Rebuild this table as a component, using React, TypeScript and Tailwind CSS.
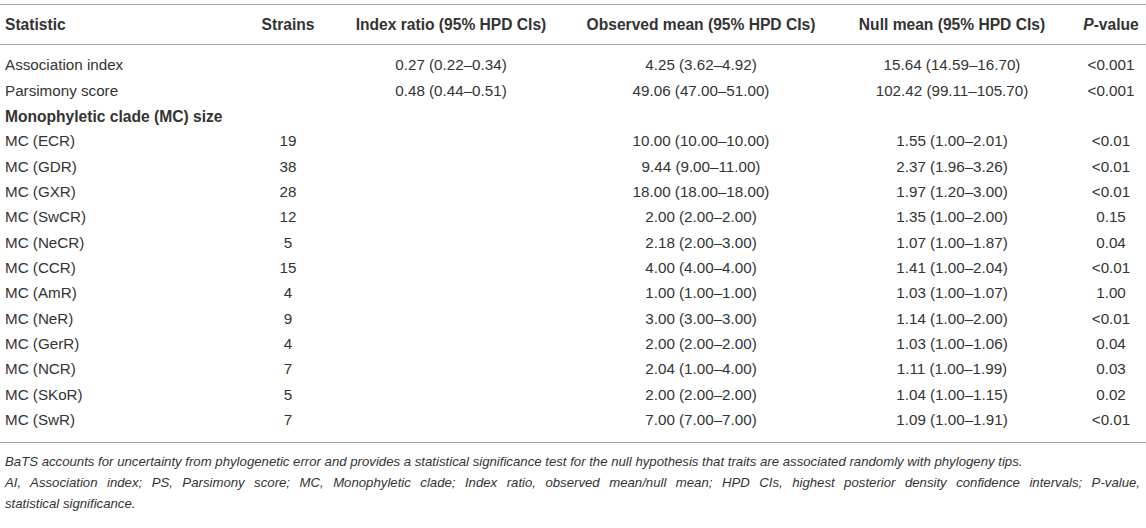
import React from 'react';

type Row = {
  name: string;
  strains?: string;
  ratio?: string;
  observed?: string;
  nullMean?: string;
  p?: string;
  bold?: boolean;
};

const rows: Row[] = [
  { name: 'Association index', ratio: '0.27 (0.22–0.34)', observed: '4.25 (3.62–4.92)', nullMean: '15.64 (14.59–16.70)', p: '<0.001' },
  { name: 'Parsimony score', ratio: '0.48 (0.44–0.51)', observed: '49.06 (47.00–51.00)', nullMean: '102.42 (99.11–105.70)', p: '<0.001' },
  { name: 'Monophyletic clade (MC) size', bold: true },
  { name: 'MC (ECR)', strains: '19', observed: '10.00 (10.00–10.00)', nullMean: '1.55 (1.00–2.01)', p: '<0.01' },
  { name: 'MC (GDR)', strains: '38', observed: '9.44 (9.00–11.00)', nullMean: '2.37 (1.96–3.26)', p: '<0.01' },
  { name: 'MC (GXR)', strains: '28', observed: '18.00 (18.00–18.00)', nullMean: '1.97 (1.20–3.00)', p: '<0.01' },
  { name: 'MC (SwCR)', strains: '12', observed: '2.00 (2.00–2.00)', nullMean: '1.35 (1.00–2.00)', p: '0.15' },
  { name: 'MC (NeCR)', strains: '5', observed: '2.18 (2.00–3.00)', nullMean: '1.07 (1.00–1.87)', p: '0.04' },
  { name: 'MC (CCR)', strains: '15', observed: '4.00 (4.00–4.00)', nullMean: '1.41 (1.00–2.04)', p: '<0.01' },
  { name: 'MC (AmR)', strains: '4', observed: '1.00 (1.00–1.00)', nullMean: '1.03 (1.00–1.07)', p: '1.00' },
  { name: 'MC (NeR)', strains: '9', observed: '3.00 (3.00–3.00)', nullMean: '1.14 (1.00–2.00)', p: '<0.01' },
  { name: 'MC (GerR)', strains: '4', observed: '2.00 (2.00–2.00)', nullMean: '1.03 (1.00–1.06)', p: '0.04' },
  { name: 'MC (NCR)', strains: '7', observed: '2.04 (1.00–4.00)', nullMean: '1.11 (1.00–1.99)', p: '0.03' },
  { name: 'MC (SKoR)', strains: '5', observed: '2.00 (2.00–2.00)', nullMean: '1.04 (1.00–1.15)', p: '0.02' },
  { name: 'MC (SwR)', strains: '7', observed: '7.00 (7.00–7.00)', nullMean: '1.09 (1.00–1.91)', p: '<0.01' },
];

const cols = 'grid grid-cols-[248px_80px_246px_254px_248px_70px]';

export default function App() {
  return (
    <div className="w-[1146px] h-[528px] bg-white text-[#333] font-['Liberation_Sans',Arial,sans-serif] overflow-hidden">
      <div className="mt-[4px] border-t border-[#a8a8a8]">
        <div className={`${cols} h-[39px] items-center text-[15.6px] font-bold`}>
          <div className="pl-[5px]">Statistic</div>
          <div className="text-center">Strains</div>
          <div className="text-center">Index ratio (95% HPD CIs)</div>
          <div className="text-center">Observed mean (95% HPD CIs)</div>
          <div className="text-center">Null mean (95% HPD CIs)</div>
          <div className="text-center"><span className="italic">P</span>-value</div>
        </div>
      </div>
      <div className="border-t border-[#a8a8a8] pt-[8px] pb-[9px] text-[15.2px]">
        {rows.map((r) => (
          <div key={r.name} className={`${cols} h-[25.35px] items-center`}>
            <div className={`pl-[5px] whitespace-nowrap ${r.bold ? 'font-bold text-[15.6px]' : ''}`}>{r.name}</div>
            <div className="text-center">{r.strains}</div>
            <div className="text-center">{r.ratio}</div>
            <div className="text-center">{r.observed}</div>
            <div className="text-center">{r.nullMean}</div>
            <div className="text-center">{r.p}</div>
          </div>
        ))}
      </div>
      <div className="border-t border-[#a8a8a8] pt-[8px] pl-[5px] pr-[6px] text-[13.2px] italic leading-[21px]">
        <p>BaTS accounts for uncertainty from phylogenetic error and provides a statistical significance test for the null hypothesis that traits are associated randomly with phylogeny tips.</p>
        <p className="text-justify [text-align-last:justify]">AI, Association index; PS, Parsimony score; MC, Monophyletic clade; Index ratio, observed mean/null mean; HPD CIs, highest posterior density confidence intervals; P-value,</p>
        <p>statistical significance.</p>
      </div>
    </div>
  );
}
